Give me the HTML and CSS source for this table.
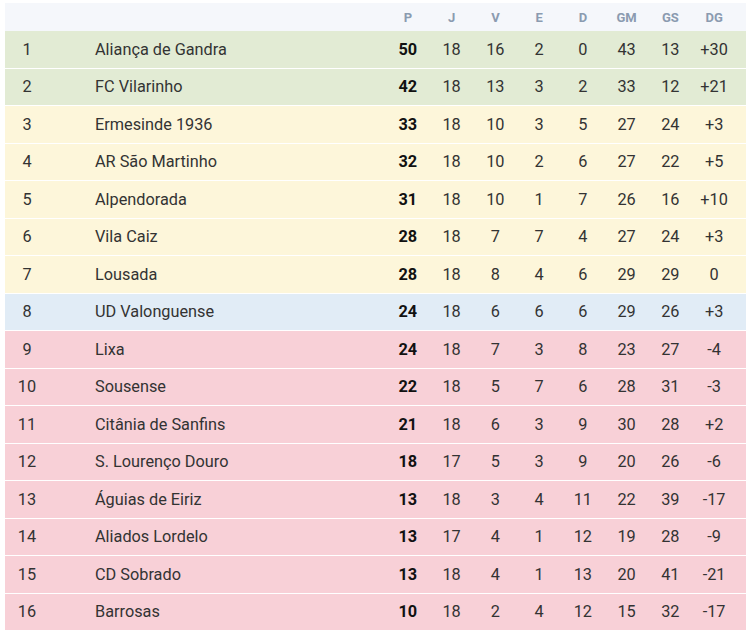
FILE: index.html
```html
<!DOCTYPE html>
<html lang="pt">
<head>
<meta charset="utf-8">
<link rel="stylesheet" href="styles.css">
</head>
<body>
<div class="table">
  <div class="row head">
    <div class="c rank"></div><div class="c name"></div>
    <div class="c">P</div><div class="c">J</div><div class="c">V</div><div class="c">E</div><div class="c">D</div><div class="c">GM</div><div class="c">GS</div><div class="c">DG</div><div class="c"></div>
  </div>
  <div class="row green"><div class="c rank">1</div><div class="c name">Aliança de Gandra</div><div class="c pts">50</div><div class="c">18</div><div class="c">16</div><div class="c">2</div><div class="c">0</div><div class="c">43</div><div class="c">13</div><div class="c">+30</div><div class="c"></div></div>
  <div class="row green"><div class="c rank">2</div><div class="c name">FC Vilarinho</div><div class="c pts">42</div><div class="c">18</div><div class="c">13</div><div class="c">3</div><div class="c">2</div><div class="c">33</div><div class="c">12</div><div class="c">+21</div><div class="c"></div></div>
  <div class="row yellow"><div class="c rank">3</div><div class="c name">Ermesinde 1936</div><div class="c pts">33</div><div class="c">18</div><div class="c">10</div><div class="c">3</div><div class="c">5</div><div class="c">27</div><div class="c">24</div><div class="c">+3</div><div class="c"></div></div>
  <div class="row yellow"><div class="c rank">4</div><div class="c name">AR São Martinho</div><div class="c pts">32</div><div class="c">18</div><div class="c">10</div><div class="c">2</div><div class="c">6</div><div class="c">27</div><div class="c">22</div><div class="c">+5</div><div class="c"></div></div>
  <div class="row yellow"><div class="c rank">5</div><div class="c name">Alpendorada</div><div class="c pts">31</div><div class="c">18</div><div class="c">10</div><div class="c">1</div><div class="c">7</div><div class="c">26</div><div class="c">16</div><div class="c">+10</div><div class="c"></div></div>
  <div class="row yellow"><div class="c rank">6</div><div class="c name">Vila Caiz</div><div class="c pts">28</div><div class="c">18</div><div class="c">7</div><div class="c">7</div><div class="c">4</div><div class="c">27</div><div class="c">24</div><div class="c">+3</div><div class="c"></div></div>
  <div class="row yellow"><div class="c rank">7</div><div class="c name">Lousada</div><div class="c pts">28</div><div class="c">18</div><div class="c">8</div><div class="c">4</div><div class="c">6</div><div class="c">29</div><div class="c">29</div><div class="c">0</div><div class="c"></div></div>
  <div class="row blue"><div class="c rank">8</div><div class="c name">UD Valonguense</div><div class="c pts">24</div><div class="c">18</div><div class="c">6</div><div class="c">6</div><div class="c">6</div><div class="c">29</div><div class="c">26</div><div class="c">+3</div><div class="c"></div></div>
  <div class="row pink"><div class="c rank">9</div><div class="c name">Lixa</div><div class="c pts">24</div><div class="c">18</div><div class="c">7</div><div class="c">3</div><div class="c">8</div><div class="c">23</div><div class="c">27</div><div class="c">-4</div><div class="c"></div></div>
  <div class="row pink"><div class="c rank">10</div><div class="c name">Sousense</div><div class="c pts">22</div><div class="c">18</div><div class="c">5</div><div class="c">7</div><div class="c">6</div><div class="c">28</div><div class="c">31</div><div class="c">-3</div><div class="c"></div></div>
  <div class="row pink"><div class="c rank">11</div><div class="c name">Citânia de Sanfins</div><div class="c pts">21</div><div class="c">18</div><div class="c">6</div><div class="c">3</div><div class="c">9</div><div class="c">30</div><div class="c">28</div><div class="c">+2</div><div class="c"></div></div>
  <div class="row pink"><div class="c rank">12</div><div class="c name">S. Lourenço Douro</div><div class="c pts">18</div><div class="c">17</div><div class="c">5</div><div class="c">3</div><div class="c">9</div><div class="c">20</div><div class="c">26</div><div class="c">-6</div><div class="c"></div></div>
  <div class="row pink"><div class="c rank">13</div><div class="c name">Águias de Eiriz</div><div class="c pts">13</div><div class="c">18</div><div class="c">3</div><div class="c">4</div><div class="c">11</div><div class="c">22</div><div class="c">39</div><div class="c">-17</div><div class="c"></div></div>
  <div class="row pink"><div class="c rank">14</div><div class="c name">Aliados Lordelo</div><div class="c pts">13</div><div class="c">17</div><div class="c">4</div><div class="c">1</div><div class="c">12</div><div class="c">19</div><div class="c">28</div><div class="c">-9</div><div class="c"></div></div>
  <div class="row pink"><div class="c rank">15</div><div class="c name">CD Sobrado</div><div class="c pts">13</div><div class="c">18</div><div class="c">4</div><div class="c">1</div><div class="c">13</div><div class="c">20</div><div class="c">41</div><div class="c">-21</div><div class="c"></div></div>
  <div class="row pink"><div class="c rank">16</div><div class="c name">Barrosas</div><div class="c pts">10</div><div class="c">18</div><div class="c">2</div><div class="c">4</div><div class="c">12</div><div class="c">15</div><div class="c">32</div><div class="c">-17</div><div class="c"></div></div>
</div>
</body>
</html>
```
FILE: styles.css
```css
html, body {
  margin: 0;
  padding: 0;
  background: #ffffff;
}
body {
  padding: 3px 0 0 5px;
  font-family: Roboto, "Liberation Sans", sans-serif;
  overflow: hidden;
}
.table {
  width: 741px;
}
.row {
  display: grid;
  grid-template-columns: 44px 337px repeat(8, 43.75px) 10px;
  height: 36.5px;
  align-items: center;
  border-bottom: 1px solid #ffffff;
  font-size: 16.3px;
  color: #333333;
}
.row.head {
  height: 28px;
  border-bottom: none;
  background: #f5f7fb;
  font-size: 13px;
  font-weight: 700;
  color: #8b9bb0;
}
.c {
  text-align: center;
  white-space: nowrap;
}
.c.name {
  text-align: left;
  padding-left: 46px;
}
.c.pts {
  font-weight: 700;
  color: #111111;
}
.green { background: #e2ebd4; }
.yellow { background: #fdf6da; }
.blue { background: #e1ecf6; }
.pink { background: #f8d0d7; }
```
